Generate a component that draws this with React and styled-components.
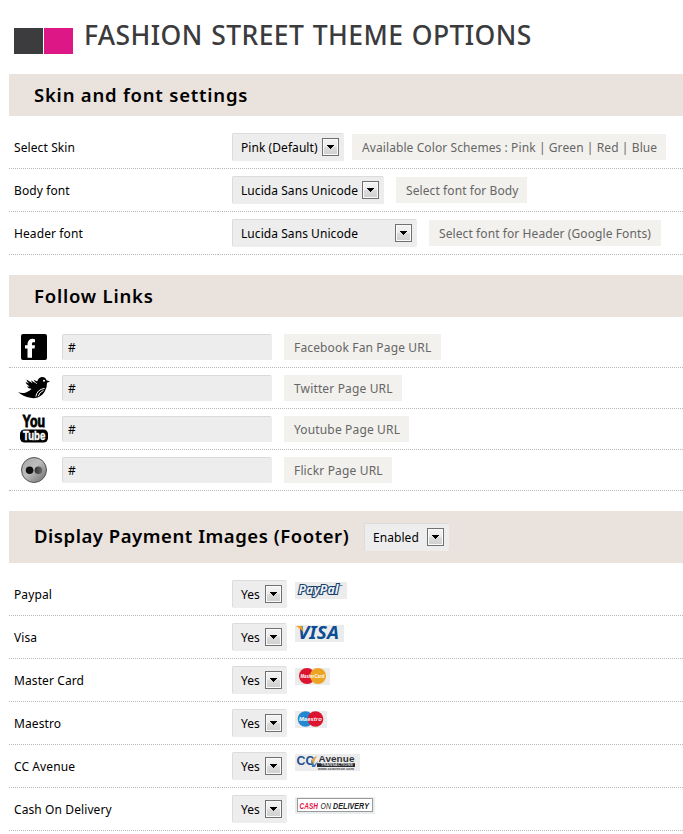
import React from 'react';
import styled, { createGlobalStyle } from 'styled-components';

const Global = createGlobalStyle`
  * { box-sizing: border-box; }
  body {
    margin: 0;
    background: #fff;
    color: #000;
    font: 12px/16px "Noto Sans", "Open Sans", sans-serif;
    overflow: hidden;
  }
`;

const Page = styled.main`
  display: flex;
  flex-direction: column;
  padding-left: 9px;
  height: 834px;
  overflow: hidden;
`;

const Header = styled.header`
  display: flex;
  flex: none;
  align-items: flex-start;
  height: 74px;
  padding: 18px 0 0 5px;
`;

const Swatches = styled.div`
  display: flex;
  gap: 1px;
  padding-top: 10px;
`;

const Swatch = styled.span`
  width: 29px;
  height: 26px;
  background: ${(p) => p.$color};
`;

const Title = styled.h1`
  margin: 0 0 0 11px;
  font-size: 26.5px;
  line-height: 35px;
  font-weight: 500;
  letter-spacing: 0.4px;
  word-spacing: 1.2px;
  color: #3b3b3d;
  white-space: nowrap;
`;

const Section = styled.section`
  display: flex;
  flex: none;
  flex-direction: column;
  margin-bottom: 20px;
`;

const Band = styled.div`
  display: flex;
  align-items: center;
  height: ${(p) => (p.$tall ? 52 : 42)}px;
  padding-left: 25px;
  margin-bottom: 10px;
  background: #eae2dc;
`;

const Heading = styled.h2`
  margin: 0;
  flex: none;
  width: ${(p) => (p.$tall ? '330px' : 'auto')};
  padding-bottom: ${(p) => (p.$tall ? 3 : 0)}px;
  font-size: 18.5px;
  line-height: 26px;
  font-weight: 600;
  letter-spacing: ${(p) => p.$track}px;
  white-space: nowrap;
`;

const Row = styled.div`
  display: grid;
  grid-template-columns: 209px 1fr;
  height: 43px;
`;

const LinkRow = styled.div`
  display: flex;
  align-items: center;
  height: 41px;
  border-bottom: 1px dotted #b8b8b8;
`;

const Cell = styled.div`
  display: flex;
  align-items: center;
  border-bottom: 1px dotted #b8b8b8;
  letter-spacing: 0.1px;
`;

const Label = styled(Cell)`
  padding: 1px 0 0 5px;
`;

const Control = styled(Cell)`
  padding-left: 14px;
`;

const SelectBox = styled.div`
  display: flex;
  align-items: center;
  justify-content: space-between;
  flex: none;
  width: ${(p) => p.$w}px;
  height: 28px;
  padding: 0 4px 0 8px;
  background: #ededed;
  border: 1px solid #ededed;
  border-top-color: #dcdcdc;
  border-left-color: #dcdcdc;
  border-radius: 2px;
  letter-spacing: 0.06px;
  white-space: nowrap;
`;

const SelectValue = styled.span`
  padding-top: 2px;
`;

const ArrowButton = styled.span`
  display: flex;
  align-items: center;
  justify-content: center;
  width: 17px;
  height: 18px;
  border: 1px solid #707070;
  box-shadow: inset 0 0 0 1px #fafafa;
  background: linear-gradient(#f4f4f4 0%, #ebebeb 48%, #dcdcdc 52%, #cfcfcf 100%);
`;

const Hint = styled.span`
  display: flex;
  align-items: center;
  height: 26px;
  width: ${(p) => p.$w}px;
  padding: 2px 0 0 10px;
  margin-left: ${(p) => p.$gap ?? 12}px;
  background: #f2f1ed;
  color: #666;
  letter-spacing: ${(p) => p.$track ?? 0.09}px;
  white-space: nowrap;
`;

const IconSlot = styled.span`
  display: flex;
  justify-content: center;
  width: 50px;
  margin-right: 3px;
`;

const Field = styled.div`
  display: flex;
  align-items: center;
  width: 210px;
  height: 26px;
  padding: 1px 0 0 5px;
  background: #ededed;
  border: 1px solid #ededed;
  border-top-color: #dadada;
  border-left-color: #dadada;
  border-radius: 2px;
`;

const PayImage = styled.svg`
  display: block;
  align-self: flex-start;
  margin: 9px 0 0 8px;
  background: #ececec;
  overflow: visible;
`;

const Icon = styled.svg`
  display: block;
  overflow: visible;
`;

function Select({ width, children }) {
  return (
    <SelectBox $w={width}>
      <SelectValue>{children}</SelectValue>
      <ArrowButton>
        <svg width="7" height="4" viewBox="0 0 7 4" shapeRendering="crispEdges">
          <path d="M0 0H7V1H6V2H5V3H4V4H3V3H2V2H1V1H0Z" />
        </svg>
      </ArrowButton>
    </SelectBox>
  );
}

const Facebook = () => (
  <Icon width="32" height="28" viewBox="0 0 32 28">
    <rect x="3" y="1" width="26" height="26" rx="2" />
    <path
      d="M17 6.2Q12 5 10.2 8.2Q9.4 9.8 9.5 12.2H7V15.4H9.5V24.8H14V15.4H16.6L17 12.2H14Q13.7 9.2 15 9.2H17Z"
      fill="#fff"
    />
  </Icon>
);

const Twitter = () => (
  <Icon width="34" height="26" viewBox="0 0 34 26">
    <path d="M1 17Q5 19 9 17.4Q13 15.8 14.7 13.8Q11.8 14 9.8 11.5L12.6 11.4Q9 9.7 8.5 7L12.2 8.4Q9.6 6.5 9.4 4.6L15.6 8.2L13.8 5.2L18.4 7.8L16.6 4.8L20.2 6.6Q21.3 2.6 24.8 2.1Q28.3 1.8 29.5 5.2L33 6.6L30 7.8Q30.3 12 27.7 16.5C24.6 22 18.8 24 13.4 22.8Q6 21.5 1 17Z" />
    <path d="M14.5 5L17.8 7.2L20 8.8" fill="none" stroke="#fff" strokeWidth=".7" />
    <circle cx="27" cy="5.8" r="1" fill="#fff" />
    <path d="M18.8 21.6Q20 14.4 27.6 13.4M21.3 21.2Q22.2 17.2 26.5 15.4" fill="none" stroke="#fff" strokeWidth="1" />
  </Icon>
);

const Youtube = () => (
  <Icon width="32" height="30" viewBox="0 0 32 30" fontFamily="Liberation Sans, sans-serif" fontWeight="700">
    <text transform="translate(4.6 13.2) scale(.68 1)" fontSize="16.5" textLength="33" lengthAdjust="spacingAndGlyphs" stroke="#000" strokeWidth=".9">
      You
    </text>
    <rect x="2" y="15.5" width="28" height="13" rx="4.5" />
    <text transform="translate(5 26.3) scale(.7 1)" fontSize="12" textLength="32" lengthAdjust="spacingAndGlyphs" fill="#fff" stroke="#fff" strokeWidth=".4">
      Tube
    </text>
  </Icon>
);

const Flickr = () => (
  <Icon width="32" height="28" viewBox="0 0 32 28">
    <defs>
      <linearGradient id="disc" x1="0" y1="0" x2="1" y2="1">
        <stop offset="0" stopColor="#a5a5a5" />
        <stop offset=".45" stopColor="#bdbdbd" />
        <stop offset="1" stopColor="#686868" />
      </linearGradient>
      <linearGradient id="dot">
        <stop offset="0" stopColor="#333" />
        <stop offset="1" stopColor="#686868" />
      </linearGradient>
    </defs>
    <circle cx="16" cy="14" r="12.5" fill="url(#disc)" stroke="#555" />
    <circle cx="11.6" cy="14.2" r="3.8" fill="#111" />
    <circle cx="20.4" cy="14.2" r="3.8" fill="url(#dot)" />
  </Icon>
);

const Paypal = () => (
  <PayImage width="52" height="17" viewBox="0 0 52 17" fontFamily="Noto Sans, sans-serif">
    <text x="3.5" y="12" fontSize="12" fontWeight="700" fontStyle="italic" fill="#eef3f8" stroke="#193f6b" strokeWidth="2.2" paintOrder="stroke" textLength="40" lengthAdjust="spacingAndGlyphs">
      PayPal
    </text>
    <path d="M45 3.5h2.5" stroke="#5a88a8" />
  </PayImage>
);

const Visa = () => (
  <PayImage width="49" height="17" viewBox="0 0 49 17">
    <text x="3" y="14" fontFamily="Noto Sans, sans-serif" fontSize="18" fontWeight="700" fontStyle="italic" fill="#0b4c95" textLength="41" lengthAdjust="spacingAndGlyphs">
      VISA
    </text>
    <path d="M1 1H6Q7.5 1 7.7 3L8 7Q5 3 1 1Z" fill="#f2a11e" />
  </PayImage>
);

const Discs = ({ width, left, right, name, cx, r, gap }) => (
  <PayImage width={width} height="17" viewBox={`0 0 ${width} 17`}>
    <circle cx={cx} cy="8" r={r} fill={left} />
    <circle cx={cx + gap} cy="8" r={r} fill={right} />
    <text x={cx - 6.6} y="10.2" fontFamily="Liberation Sans, sans-serif" fontSize="6" fontWeight="700" fontStyle="italic" fill="#fff" textLength={gap + 13} lengthAdjust="spacingAndGlyphs">
      {name}
    </text>
  </PayImage>
);

const MasterCard = () => <Discs width={35} left="#dc1430" right="#eca424" name="MasterCard" cx={12} r={8} gap={11} />;
const Maestro = () => <Discs width={32} left="#2388cf" right="#dc1430" name="Maestro" cx={10.5} r={7.8} gap={10} />;

const CcAvenue = () => (
  <PayImage width="65" height="17" viewBox="0 0 65 17" fontFamily="Liberation Sans, sans-serif">
    <text x="1.5" y="11.2" fontSize="13" fontWeight="700" fill="#234f91" textLength="18" lengthAdjust="spacingAndGlyphs">
      CC
    </text>
    <path d="M16 8Q18 3 22 2Q19 6 19 11Z" fill="#e0a64a" />
    <path d="M16 5L19 11L23 7L20 13H17Z" fill="#3e76b5" />
    <text x="23.5" y="8.4" fontSize="9.5" fontWeight="700" fill="#303438" textLength="36" lengthAdjust="spacingAndGlyphs">
      Avenue
    </text>
    <rect x="22" y="9.2" width="38" height="3.8" fill="#26292d" />
    <text x="26" y="12.4" fontSize="3.6" fontWeight="700" fill="#ddd" textLength="32" lengthAdjust="spacingAndGlyphs">
      TRANSACTIONS
    </text>
    <text x="23" y="16" fontSize="3.6" fontWeight="700" fill="#444" textLength="36" lengthAdjust="spacingAndGlyphs">
      www.ccavenue.com
    </text>
  </PayImage>
);

const CashOnDelivery = () => (
  <PayImage width="80" height="17" viewBox="0 0 80 17" fontFamily="Liberation Sans, sans-serif" fontSize="9.6" fontStyle="italic">
    <rect width="80" height="17" fill="#e8eeee" />
    <rect x="2.5" y="1.5" width="75" height="13" fill="#fff" stroke="#9a9a9a" />
    <text x="4.5" y="11.5" fontWeight="700" fill="#e21348" textLength="18.5" lengthAdjust="spacingAndGlyphs">CASH</text>
    <text x="25.5" y="11.5" fill="#222" textLength="10.5" lengthAdjust="spacingAndGlyphs">ON</text>
    <text x="38" y="11.5" fontWeight="700" fill="#222" textLength="36" lengthAdjust="spacingAndGlyphs">DELIVERY</text>
  </PayImage>
);

const settings = [
  { label: 'Select Skin', value: 'Pink (Default)', width: 112, hint: 'Available Color Schemes : Pink | Green | Red | Blue', hintWidth: 314, gap: 8 },
  { label: 'Body font', value: 'Lucida Sans Unicode', width: 152, hint: 'Select font for Body', hintWidth: 131 },
  { label: 'Header font', value: 'Lucida Sans Unicode', width: 185, hint: 'Select font for Header (Google Fonts)', hintWidth: 232 },
];

const links = [
  { Art: Facebook, hint: 'Facebook Fan Page URL', width: 157 },
  { Art: Twitter, hint: 'Twitter Page URL', width: 118 },
  { Art: Youtube, hint: 'Youtube Page URL', width: 125 },
  { Art: Flickr, hint: 'Flickr Page URL', width: 108 },
];

const payments = [
  { label: 'Paypal', Art: Paypal },
  { label: 'Visa', Art: Visa },
  { label: 'Master Card', Art: MasterCard },
  { label: 'Maestro', Art: Maestro },
  { label: 'CC Avenue', Art: CcAvenue },
  { label: 'Cash On Delivery', Art: CashOnDelivery },
];

export default function App() {
  return (
    <Page>
      <Global />
      <Header>
        <Swatches>
          <Swatch $color="#3c3c3e" />
          <Swatch $color="#dd1785" />
        </Swatches>
        <Title>FASHION STREET THEME OPTIONS</Title>
      </Header>

      <Section>
        <Band>
          <Heading $track={0.78}>Skin and font settings</Heading>
        </Band>
        {settings.map((s) => (
          <Row key={s.label}>
            <Label>{s.label}</Label>
            <Control>
              <Select width={s.width}>{s.value}</Select>
              <Hint $w={s.hintWidth} $gap={s.gap}>{s.hint}</Hint>
            </Control>
          </Row>
        ))}
      </Section>

      <Section>
        <Band>
          <Heading $track={0.78}>Follow Links</Heading>
        </Band>
        {links.map(({ Art, hint, width }) => (
          <LinkRow key={hint}>
            <IconSlot>
              <Art />
            </IconSlot>
            <Field>#</Field>
            <Hint $w={width} $track={0.15}>{hint}</Hint>
          </LinkRow>
        ))}
      </Section>

      <Section>
        <Band $tall>
          <Heading $tall $track={0.54}>Display Payment Images (Footer)</Heading>
          <Select width={85}>Enabled</Select>
        </Band>
        {payments.map(({ label, Art }) => (
          <Row key={label}>
            <Label>{label}</Label>
            <Control>
              <Select width={55}>Yes</Select>
              <Art />
            </Control>
          </Row>
        ))}
      </Section>
    </Page>
  );
}
